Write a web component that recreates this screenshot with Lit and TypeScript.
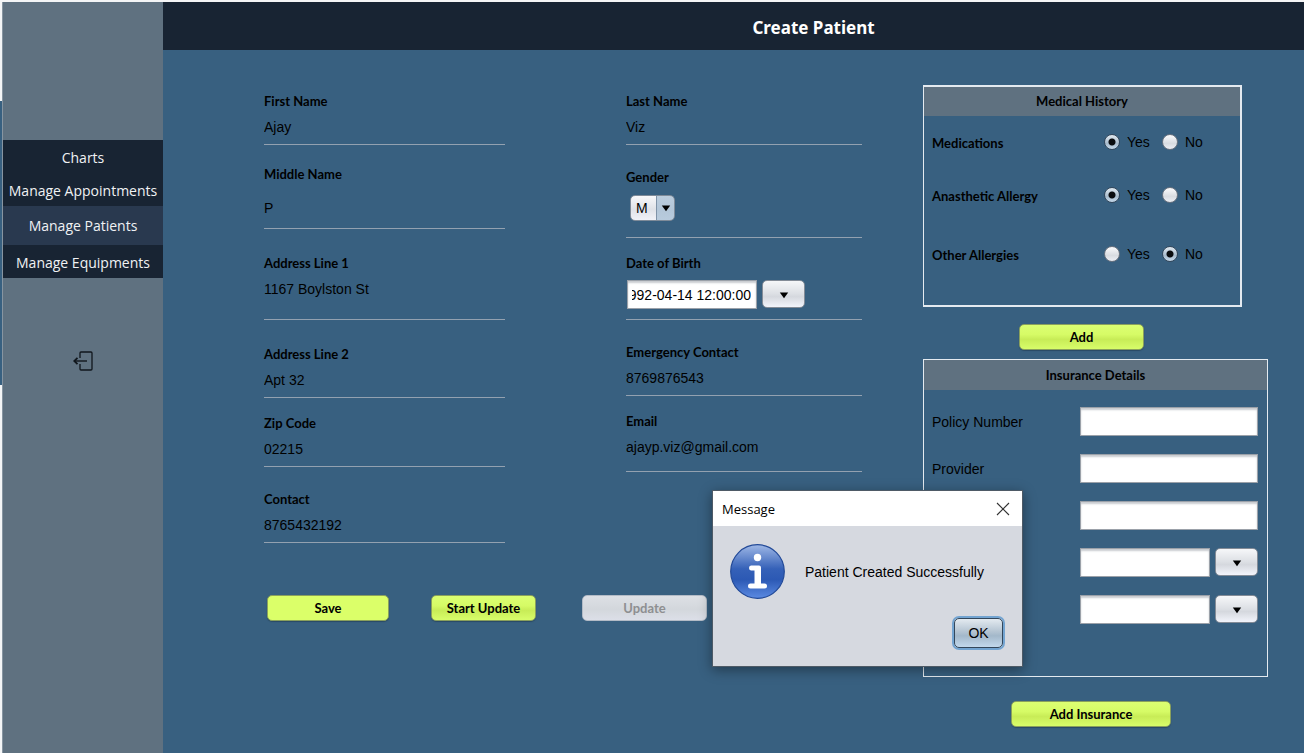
import { LitElement, html, css, svg } from "lit";
import { customElement, state } from "lit/decorators.js";
import { classMap } from "lit/directives/class-map.js";

interface Field {
  id: string;
  label: string;
  value: string;
  kind?: "text" | "select" | "date";
  gap: string;
  room?: string;
}

const LEFT_FIELDS: Field[] = [
  { id: "first", label: "First Name", value: "Ajay", gap: "" },
  { id: "middle", label: "Middle Name", value: "P", gap: "gap-m", room: "airy" },
  { id: "address1", label: "Address Line 1", value: "1167 Boylston St", gap: "gap-xl", room: "deep" },
  { id: "address2", label: "Address Line 2", value: "Apt 32", gap: "gap-xl" },
  { id: "zip", label: "Zip Code", value: "02215", gap: "gap-s" },
  { id: "contact", label: "Contact", value: "8765432192", gap: "gap-l" },
];

const RIGHT_FIELDS: Field[] = [
  { id: "last", label: "Last Name", value: "Viz", gap: "" },
  { id: "gender", label: "Gender", value: "M", kind: "select", gap: "gap-l", room: "mid" },
  { id: "dob", label: "Date of Birth", value: "1992-04-14 12:00:00", kind: "date", gap: "gap-s" },
  { id: "emergency", label: "Emergency Contact", value: "8769876543", gap: "gap-l" },
  { id: "email", label: "Email", value: "ajayp.viz@gmail.com", gap: "gap-s", room: "mid" },
];

const NAV = ["Charts", "Manage Appointments", "Manage Patients", "Manage Equipments"];

const arrow = html`<svg class="arrow" viewBox="0 0 10 7" width="10" height="7" aria-hidden="true">
  ${svg`<path d="M0.8 0.5H9.2L5 6.2Z" fill="currentColor"/>`}
</svg>`;

@customElement("app-root")
export class AppRoot extends LitElement {
  @state() private open = true;
  @state() private current = "Manage Patients";

  static styles = css`
    :host {
      display: block;
      position: relative;
      box-sizing: border-box;
      min-height: 100vh;
      padding: 2px 0 0 2px;
      background: linear-gradient(#f4f5f6 101px, #386080 101px, #386080 385px, #f4f5f6 385px);
      font: 14px/16px "Liberation Sans", Arial, sans-serif;
      color: #000;
    }
    * { box-sizing: border-box; }
    .shell { display: flex; min-height: calc(100vh - 2px); }
    .side {
      flex: 0 0 161px;
      padding-top: 138px;
      background: #5f7180;
      border-left: 1px solid #8795a1;
      display: flex;
      flex-direction: column;
    }
    .nav-item {
      display: block;
      height: 33px;
      line-height: 35px;
      background: #182433;
      color: #f0f2f4;
      font-family: "Open Sans", "Noto Sans", sans-serif;
      text-align: center;
      text-decoration: none;
      white-space: nowrap;
    }
    .nav-item.current { height: 39px; line-height: 40px; background: #29394f; }
    .logout {
      align-self: center;
      margin-top: 73px;
      padding: 0;
      border: 0;
      background: none;
      line-height: 0;
    }
    .main { flex: 1; min-width: 0; background: #386080; }
    .bar {
      height: 48px;
      padding: 3px 0 0 160px;
      background: #182433;
      display: flex;
      align-items: center;
      justify-content: center;
    }
    .bar h1 {
      margin: 0;
      font: bold 17px/24px "Noto Sans", "Open Sans", sans-serif;
      color: #fff;
    }
    .content {
      display: grid;
      grid-template-columns: 598fr 345fr;
      gap: 61px;
      padding: 35px 36px 24px 101px;
    }
    .fields { display: grid; grid-template-columns: 241fr 236fr; gap: 121px; padding-top: 8px; }
    .title { font: bold 13px/16px Lato, sans-serif; }
    .field { display: flex; flex-direction: column; gap: 10px; padding-bottom: 9px; border-bottom: 1px solid #93a1b0; }
    .gap-s { margin-top: 17px; }
    .gap-m { margin-top: 21px; }
    .gap-l { margin-top: 24px; }
    .gap-xl { margin-top: 26px; }
    .mid { padding-bottom: 16px; }
    .airy { gap: 18px; padding-bottom: 12px; }
    .deep { padding-bottom: 22px; }
    .plain {
      width: 100%;
      height: 16px;
      padding: 0;
      border: 0;
      outline: 0;
      background: none;
      font: inherit;
      color: inherit;
    }
    .actions { display: flex; gap: 46px; margin-top: 52px; padding-left: 3px; }
    .pair { display: flex; gap: 42px; }
    .btn {
      height: 26px;
      padding: 0;
      border: 1px solid #8aa05c;
      border-radius: 5px;
      background: linear-gradient(#dcff72, #d6fb66 40%, #c8ec57 60%, #d8fd6a);
      box-shadow: 0 1px 1px #2a4a64;
      color: #000;
    }
    .btn.flat { background: #dbff69; }
    .btn:disabled { background: linear-gradient(#dde0e5, #d3d7dc 55%, #dcdfe8); border-color: #b3bbc6; color: #8e8f91; box-shadow: none; }
    .w-save { width: 122px; }
    .w-start { width: 105px; }
    .w-add { width: 125px; }
    .w-ins { width: 160px; }
    .combo { display: grid; width: 45px; height: 26px; margin-left: 4px; }
    .combo > * { grid-area: 1 / 1; }
    .combo select {
      appearance: none;
      width: 100%;
      padding: 0 0 0 5px;
      border: 1px solid #7f8b99;
      border-radius: 5px;
      background: linear-gradient(90deg, transparent 25px, #7f93a8 25px, #7f93a8 26px, #9db8d0aa 26px),
        linear-gradient(#f8f8fa, #dfe2e8 55%, #f0f2f8);
      font: inherit;
      color: #000;
    }
    .combo .arrow { align-self: center; justify-self: end; margin-right: 4px; pointer-events: none; }
    .picker { display: flex; gap: 5px; }
    .box {
      width: 100%;
      min-width: 0;
      height: 29px;
      padding: 0 6px;
      border: 1px solid #9ba1a9;
      outline: 0;
      background: #fff;
      box-shadow: inset 0 2px 2px #c9ccd0;
      font: inherit;
      color: #000;
    }
    .dob { margin: -1px 0 1px 1px; }
    .dob .box { width: 130px; padding: 0 5px 0 4px; }
    .drop {
      flex: 0 0 43px;
      height: 28px;
      padding: 0;
      border: 1px solid #848c97;
      border-radius: 5px;
      background: linear-gradient(#f6f7f9, #dcdfe4 50%, #d5d8de 60%, #f2f4fb);
      color: #000;
    }
    .aside { display: flex; flex-direction: column; align-items: flex-start; }
    .panel { border: 1px solid #e4eaf0; width: 100%; }
    .panel h2 {
      margin: 0;
      height: 30px;
      line-height: 30px;
      background: #5f7180;
      text-align: center;
    }
    .medical { width: calc(100% - 26px); border-width: 2px 2px 2px 1px; }
    .medical h2 { height: 29px; line-height: 28px; }
    .questions { display: flex; flex-direction: column; gap: 35px; padding: 17px 36px 42px 8px; }
    .question { display: flex; align-items: center; }
    .question .title { flex: 1; padding-top: 2px; }
    .question:last-child { padding-top: 6px; }
    .choice { display: flex; align-items: center; gap: 7px; width: 58px; }
    .choice:last-child { width: 42px; }
    .choice input {
      appearance: none;
      flex: 0 0 16px;
      height: 16px;
      margin: 0;
      border: 1px solid #6b7480;
      border-radius: 50%;
      background: linear-gradient(#fbfbfc, #d9dce1 60%, #eceef4);
    }
    .choice input:checked {
      border-color: #34485c;
      background: radial-gradient(circle, #0b0d10 3px, transparent 4px), linear-gradient(#e2eaf1, #a9bccd 60%, #c4d8ea);
    }
    .under { display: flex; justify-content: center; width: calc(100% - 28px); margin: 17px 0 9px; }
    .under.last { width: calc(100% - 9px); margin: 24px 0 0; }
    .rows { display: grid; grid-template-columns: 148fr 178fr; row-gap: 18px; padding: 17px 9px 52px 8px; align-items: center; }
    .rows .picker, .rows .box { grid-column: 2; }
    .dialog {
      position: absolute;
      left: 712px;
      top: 490px;
      width: 311px;
      height: 177px;
      border: 1px solid #4e5a66;
      background: #d6d9e0;
      box-shadow: 0 3px 12px rgba(0, 0, 0, 0.4);
    }
    .caption {
      display: flex;
      align-items: center;
      justify-content: space-between;
      height: 35px;
      padding: 0 12px 0 9px;
      background: #fff;
      font: 13px/18px "Open Sans", "Noto Sans", sans-serif;
    }
    .close { padding: 0; border: 0; background: none; line-height: 0; }
    .message { display: flex; align-items: center; gap: 20px; padding: 18px 17px 0; }
    .message p { margin: 0; }
    .foot { display: flex; justify-content: flex-end; padding: 19px 19px 0; }
    .ok {
      width: 49px;
      height: 30px;
      padding: 0;
      border: 1px solid #33475b;
      border-radius: 5px;
      background: linear-gradient(#e3eaf0, #b4c4d2 45%, #a3b8ca 60%, #c2d8ec);
      box-shadow: 0 0 0 2px #73a4d1;
      font: inherit;
      color: #000;
    }
  `;

  firstUpdated() {
    const dob = this.renderRoot.querySelector<HTMLInputElement>("#dob");
    if (dob) dob.scrollLeft = dob.scrollWidth;
  }

  private control(f: Field) {
    if (f.kind === "select")
      return html`<div class="combo">
        <select id=${f.id}><option>M</option><option>F</option></select>${arrow}
      </div>`;
    if (f.kind === "date")
      return html`<div class="picker dob">
        <input class="box" id=${f.id} type="text" .value=${f.value} />
        <button class="drop" aria-label="Choose date of birth">${arrow}</button>
      </div>`;
    return html`<input class="plain" id=${f.id} type="text" .value=${f.value} />`;
  }

  private column(fields: Field[]) {
    return html`<div>
      ${fields.map(
        (f) => html`<div class="field ${f.gap} ${f.room ?? ""}">
          <label class="title" for=${f.id}>${f.label}</label>
          ${this.control(f)}
        </div>`
      )}
    </div>`;
  }

  private question(name: string, text: string, yes: boolean) {
    return html`<div class="question" role="radiogroup" aria-labelledby=${name}>
      <span class="title" id=${name}>${text}</span>
      <label class="choice"><input type="radio" name=${name} ?checked=${yes} />Yes</label>
      <label class="choice"><input type="radio" name=${name} ?checked=${!yes} />No</label>
    </div>`;
  }

  private dateRow(name: string) {
    return html`<div class="picker">
      <input class="box" type="text" aria-label=${name} />
      <button class="drop" aria-label="Choose ${name}">${arrow}</button>
    </div>`;
  }

  private dialog() {
    return html`<section class="dialog" role="dialog" aria-labelledby="caption">
      <div class="caption">
        <span id="caption">Message</span>
        <button class="close" aria-label="Close" @click=${() => (this.open = false)}>
          <svg width="14" height="14" viewBox="0 0 14 14">
            <path d="M1 1L13 13M13 1L1 13" stroke="#333" stroke-width="1.1" />
          </svg>
        </button>
      </div>
      <div class="message">
        <svg width="55" height="55" viewBox="0 0 55 55" aria-hidden="true">
          <defs>
            <linearGradient id="ball" x1="0" y1="0" x2="0" y2="1">
              <stop offset="0" stop-color="#9fb8e6" />
              <stop offset="0.45" stop-color="#3561b8" />
              <stop offset="0.65" stop-color="#2c59b4" />
              <stop offset="1" stop-color="#5b8ae2" />
            </linearGradient>
          </defs>
          <circle cx="27.5" cy="27.5" r="26.8" fill="url(#ball)" stroke="#234a98" stroke-width="1.2" />
          <g fill="#fff">
            <circle cx="27.5" cy="13.5" r="3.7" />
            <path d="M21 21.5H29Q31 21.5 31 23.5V39.5H34.5Q37 39.5 37 42T34.5 44.5H20.5Q18 44.5 18 42T20.5 39.5H24.5V26.5H21Q19 26.3 19 24T21 21.5Z" />
          </g>
        </svg>
        <p>Patient Created Successfully</p>
      </div>
      <div class="foot"><button class="ok" @click=${() => (this.open = false)}>OK</button></div>
    </section>`;
  }

  render() {
    return html`<div class="shell">
        <nav class="side">
          ${NAV.map(
            (n) => html`<a
              href="#"
              class=${classMap({ "nav-item": true, current: n === this.current })}
              @click=${(e: Event) => {
                e.preventDefault();
                this.current = n;
              }}
              >${n}</a
            >`
          )}
          <button class="logout" aria-label="Log out">
            <svg width="20" height="20" viewBox="0 0 20 20" fill="none" stroke="#10161c" stroke-width="1.3">
              <path d="M7 7V2Q7 1 8 1H18Q19 1 19 2V18Q19 19 18 19H8Q7 19 7 18V13" />
              <path d="M14 10H2" stroke="#222b33" stroke-width="1.8" />
              <path d="M4.5 6.8L1.2 10L4.5 13.2" stroke-width="1.8" />
            </svg>
          </button>
        </nav>
        <main class="main">
          <header class="bar"><h1>Create Patient</h1></header>
          <div class="content">
            <form @submit=${(e: Event) => e.preventDefault()}>
              <div class="fields">${this.column(LEFT_FIELDS)}${this.column(RIGHT_FIELDS)}</div>
              <div class="actions">
                <div class="pair">
                  <button type="button" class="btn title flat w-save">Save</button>
                  <button type="button" class="btn title w-start">Start Update</button>
                </div>
                <button type="button" class="btn title w-add" disabled>Update</button>
              </div>
            </form>
            <div class="aside">
              <section class="panel medical">
                <h2 class="title">Medical History</h2>
                <div class="questions">
                  ${this.question("medications", "Medications", true)}
                  ${this.question("anasthetic", "Anasthetic Allergy", true)}
                  ${this.question("other", "Other Allergies", false)}
                </div>
              </section>
              <div class="under"><button class="btn title w-add">Add</button></div>
              <section class="panel">
                <h2 class="title">Insurance Details</h2>
                <div class="rows">
                  <label for="policy">Policy Number</label>
                  <input class="box" id="policy" type="text" />
                  <label for="provider">Provider</label>
                  <input class="box" id="provider" type="text" />
                  <input class="box" type="text" aria-label="Plan" />
                  ${this.dateRow("Start date")} ${this.dateRow("End date")}
                </div>
              </section>
              <div class="under last"><button class="btn title w-ins">Add Insurance</button></div>
            </div>
          </div>
        </main>
      </div>
      ${this.open ? this.dialog() : null}`;
  }
}
